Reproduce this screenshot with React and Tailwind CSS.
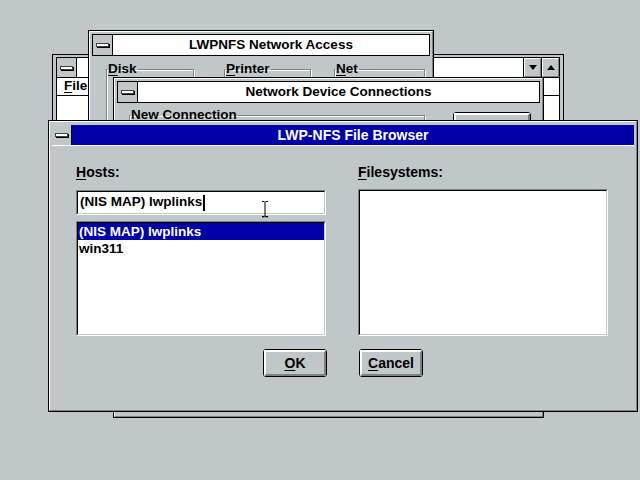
import React from 'react';

const U = ({ children }) => (
  <span className="underline decoration-1 underline-offset-[2px]">{children}</span>
);

const SysBox = () => (
  <div className="w-[20px] shrink-0 flex items-center justify-center bg-[#c0c7c8] border-r border-black">
    <div className="w-[13px] h-[4px] bg-white border border-[#404040] shadow-[1px_1px_0_#000]" />
  </div>
);

// Win 3.1 modal dialog frame
const DialogFrame = ({ className, children }) => (
  <div className={`absolute border border-black bg-[#c0c7c8] ${className}`}>
    <div className="h-full flex flex-col border border-t-white border-l-white border-r-[#808080] border-b-[#808080] p-[2px]">
      {children}
    </div>
  </div>
);

const InactiveTitle = ({ title }) => (
  <div className="flex h-[22px] shrink-0 border border-black bg-white">
    <SysBox />
    <div className="flex-1 flex items-center justify-center font-bold text-[13.5px]">{title}</div>
  </div>
);

const Group = ({ label, className, children }) => (
  <fieldset className={`border border-[#808080] shadow-[1px_1px_0_#fff,inset_1px_1px_0_#fff] ${className}`}>
    <legend className="px-[1px] font-bold text-[13.5px] leading-[16px]">{label}</legend>
    {children}
  </fieldset>
);

const Btn = ({ className = 'w-[64px]', children }) => (
  <div className={`h-[28px] border border-black rounded-[3px] bg-[#c0c7c8] ${className}`}>
    <div className="h-full border-2 border-t-white border-l-white border-r-[#808080] border-b-[#808080] flex items-center justify-center font-bold text-[14px]">
      {children}
    </div>
  </div>
);

const Sunken = ({ className, children }) => (
  <div className={`border border-t-[#808080] border-l-[#808080] border-r-white border-b-white ${className}`}>
    <div className="h-full border border-t-black border-l-black border-r-[#c0c7c8] border-b-[#c0c7c8] bg-white">
      {children}
    </div>
  </div>
);

const ArrowBtn = ({ up }) => (
  <div className="w-[18px] shrink-0 border-l border-black bg-[#c0c7c8]">
    <div className="h-full flex items-center justify-center border border-t-white border-l-white border-r-[#808080] border-b-[#808080]">
      <svg width="8" height="5" viewBox="0 0 8 5">
        <path d={up ? 'M0 5h8L4 0z' : 'M0 0h8L4 5z'} fill="#000" />
      </svg>
    </div>
  </div>
);

export default function App() {
  return (
    <div className="relative w-[640px] h-[480px] overflow-hidden bg-[#c0c7c8] text-black font-['Liberation_Sans',Arial,sans-serif]">
      {/* app window (back) */}
      <div className="absolute left-[52px] top-[54px] w-[512px] h-[340px] border border-black bg-[#c0c7c8] p-[3px] pt-[2px]">
        <div className="h-full flex flex-col border border-black bg-white">
          <div className="flex h-[20px] shrink-0 border-b border-black">
            <SysBox />
            <div className="flex-1" />
            <ArrowBtn />
            <ArrowBtn up />
          </div>
          <div className="h-[18px] shrink-0 border-b border-black flex items-center pl-[7px] font-bold text-[13.5px]">
            <U>F</U>ile
          </div>
          <div className="flex-1" />
        </div>
      </div>

      {/* LWPNFS Network Access */}
      <DialogFrame className="left-[88px] top-[30px] w-[346px] h-[300px]">
        <InactiveTitle title="LWPNFS Network Access" />
        <div className="flex pl-[14px] mt-[5px]">
          <Group label={<><U>D</U>isk</>} className="w-[88px] h-[100px]" />
          <Group label={<><U>P</U>rinter</>} className="w-[87px] h-[100px] ml-[30px]" />
          <Group label={<><U>N</U>et</>} className="w-[91px] h-[100px] ml-[23px]" />
        </div>
      </DialogFrame>

      {/* Network Device Connections */}
      <DialogFrame className="left-[113px] top-[77px] w-[431px] h-[341px]">
        <InactiveTitle title="Network Device Connections" />
        <div className="flex pl-[12px] mt-[4px]">
          <Group label="New Connection" className="w-[296px] h-[120px]" />
          <Btn className="w-[78px] ml-[28px] mt-[5px]">Close</Btn>
        </div>
      </DialogFrame>

      {/* LWP-NFS File Browser (active) */}
      <DialogFrame className="left-[48px] top-[120px] w-[590px] h-[292px]">
        <div className="flex h-[22px] shrink-0 border-t border-t-[#c0c7c8] border-b border-b-white">
          <SysBox />
          <div className="flex-1 bg-[#0000a8] text-white flex items-center justify-center font-bold text-[14px]">
            LWP-NFS File Browser
          </div>
        </div>

        <div className="flex gap-[32px] pl-[24px] pt-[18px]">
          <div className="w-[250px] flex flex-col">
            <div className="h-[16px] leading-[16px] font-bold text-[14px]">
              <U>H</U>osts:
            </div>
            <Sunken className="mt-[10px] h-[25px]">
              <div className="h-full flex items-center pl-[2px] font-bold text-[13.5px]">
                (NIS MAP) lwplinks
                <span className="inline-block w-[2px] h-[16px] bg-black ml-[1px]" />
              </div>
            </Sunken>
            <Sunken className="mt-[6px] h-[115px]">
              <div className="flex flex-col font-bold text-[13.5px] leading-[17px]">
                <div className="h-[17px] bg-[#0000a8] text-white pl-[1px]">(NIS MAP) lwplinks</div>
                <div className="h-[17px] pl-[1px]">win311</div>
              </div>
            </Sunken>
          </div>

          <div className="w-[250px] flex flex-col">
            <div className="h-[16px] leading-[16px] font-bold text-[14px]">
              <U>F</U>ilesystems:
            </div>
            <Sunken className="mt-[9px] h-[147px]" />
          </div>
        </div>

        <div className="flex justify-center gap-[32px] mt-[13px]">
          <Btn><U>O</U>K</Btn>
          <Btn><U>C</U>ancel</Btn>
        </div>
      </DialogFrame>

      {/* mouse I-beam */}
      <svg className="absolute left-[261px] top-[201px]" width="8" height="18" viewBox="0 0 8 18">
        <path d="M1 16.5h2.5M4.5 16.5H7" stroke="#808080" strokeWidth="1" />
        <path d="M1 .5h2.5M4.5 .5H7M4 1v15M1 15.5h2.5M4.5 15.5H7" stroke="#000" strokeWidth="1" />
      </svg>
    </div>
  );
}
